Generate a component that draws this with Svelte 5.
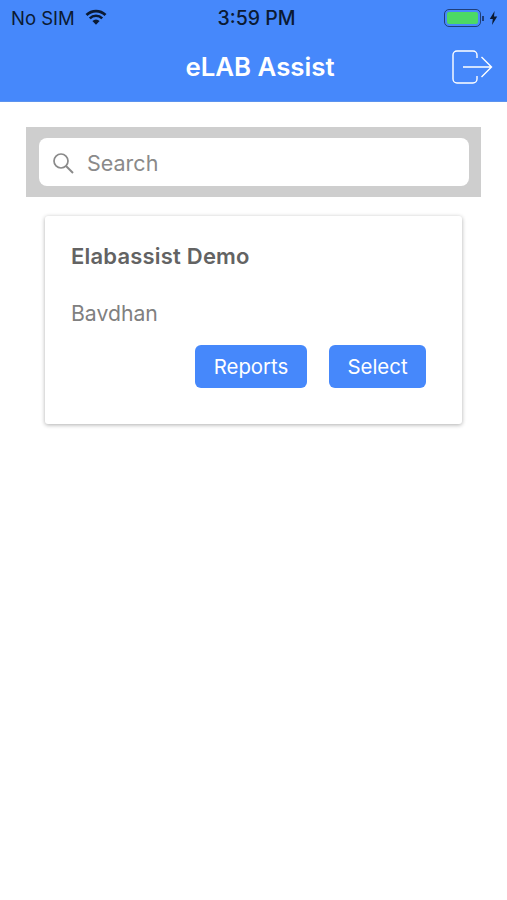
<script lang="ts">
	let query = $state('');
</script>

<div class="page">
	<header class="topbar">
		<div class="status">
			<div class="status-left">
				<span>No SIM</span>
				<svg class="wifi" width="22" height="16" viewBox="0 0 22 16" aria-hidden="true">
					<path d="M11 15.8L7.4 12a5 5 0 0 1 7.2 0z" fill="#0b1a33" />
					<path d="M4.8 9.3a8.8 8.8 0 0 1 12.4 0" fill="none" stroke="#0b1a33" stroke-width="2.6" />
					<path d="M1.5 6a13.5 13.5 0 0 1 19 0" fill="none" stroke="#0b1a33" stroke-width="2.8" />
				</svg>
			</div>
			<span class="clock">3:59 PM</span>
			<div class="status-right">
				<div class="battery"><div class="charge"></div></div>
				<div class="nub"></div>
				<svg class="bolt" width="9" height="14" viewBox="0 0 9 14" aria-hidden="true">
					<path d="M5.6 0L0.8 8h3L3 14l5.2-8.4H5z" fill="#0b1a33" />
				</svg>
			</div>
		</div>
		<div class="titlebar">
			<h1>eLAB Assist</h1>
			<svg class="logout" width="42" height="36" viewBox="0 0 42 36" aria-hidden="true">
				<path d="M26 9V6a4 4 0 0 0-4-4H6a4 4 0 0 0-4 4v24a4 4 0 0 0 4 4h16a4 4 0 0 0 4-4v-3" fill="none" stroke="#fff" stroke-width="1.4" />
				<path d="M12 18h28.5M30.5 8l10 10-10 10" fill="none" stroke="#fff" stroke-width="1.4" />
			</svg>
		</div>
	</header>

	<main class="content">
		<div class="searchbar">
			<label class="search-field">
				<svg width="22" height="22" viewBox="0 0 22 22" aria-hidden="true">
					<circle cx="9" cy="9" r="7" fill="none" stroke="#8a8a8a" stroke-width="1.7" />
					<path d="M14 14l7 7" stroke="#8a8a8a" stroke-width="1.9" />
				</svg>
				<input bind:value={query} placeholder="Search" />
			</label>
		</div>

		<section class="card">
			<h2>Elabassist Demo</h2>
			<p>Bavdhan</p>
			<div class="actions">
				<button class="reports">Reports</button>
				<button class="select">Select</button>
			</div>
		</section>
	</main>
</div>

<style>
	:global(body) {
		margin: 0;
		background: #fff;
	}

	.page {
		width: 507px;
		height: 900px;
		font-family: Inter, 'Liberation Sans', sans-serif;
		overflow: hidden;
	}

	.topbar {
		height: 102px;
		background: #4688fb;
		box-sizing: border-box;
		border-bottom: 1px solid #5c93ee;
	}

	.status {
		display: grid;
		grid-template-columns: 1fr auto 1fr;
		align-items: center;
		height: 36px;
		padding: 0 9px 0 11px;
		color: #0b1a33;
		font-size: 18.5px;
	}

	.status-left {
		display: flex;
		align-items: center;
		gap: 10px;
	}

	.wifi {
		margin-top: -3px;
	}

	.clock {
		margin-left: 4px;
		font-size: 19.5px;
		font-weight: 500;
	}

	.status-right {
		display: flex;
		align-items: center;
		justify-content: flex-end;
		gap: 1px;
	}

	.battery {
		width: 37px;
		height: 18px;
		box-sizing: border-box;
		padding: 2px;
		border: 1px solid #1f3f7a;
		border-radius: 5px;
	}

	.charge {
		height: 100%;
		background: #4cd964;
		border-radius: 2px;
	}

	.nub {
		width: 2px;
		height: 5px;
		background: #1f3f7a;
	}

	.bolt {
		margin-left: 4px;
	}

	.titlebar {
		position: relative;
		display: flex;
		justify-content: center;
		align-items: center;
		height: 60px;
		padding-left: 13px;
		box-sizing: border-box;
	}

	h1 {
		margin: 0;
		font-size: 25.8px;
		font-weight: 600;
		color: #fff;
	}

	.logout {
		position: absolute;
		right: 14px;
		top: 13px;
	}

	.content {
		display: flex;
		flex-direction: column;
		padding: 25px 26px 0;
	}

	.searchbar {
		background: #cecece;
		padding: 11px 12px 11px 13px;
	}

	.search-field {
		display: flex;
		align-items: center;
		gap: 13px;
		height: 48px;
		box-sizing: border-box;
		padding: 2px 13px 0;
		background: #fff;
		border-radius: 8px;
	}

	.search-field input {
		flex: 1;
		min-width: 0;
		border: 0;
		outline: 0;
		padding: 0;
		font: inherit;
		font-size: 21.5px;
		color: #333;
	}

	.search-field input::placeholder {
		color: #8a8a8a;
		opacity: 1;
	}

	.card {
		margin: 19px 19px 0;
		height: 208px;
		box-sizing: border-box;
		padding: 27px 36px 0 26px;
		background: #fff;
		border-radius: 3px;
		box-shadow: 0 1px 4px rgba(0, 0, 0, 0.32);
	}

	h2 {
		margin: 0;
		font-size: 22px;
		line-height: 26px;
		font-weight: 600;
		letter-spacing: 0.2px;
		color: #636363;
	}

	p {
		margin: 31px 0 0;
		font-size: 21.2px;
		line-height: 26px;
		color: #808080;
	}

	.actions {
		display: flex;
		justify-content: flex-end;
		gap: 22px;
		margin-top: 19px;
	}

	button {
		height: 43px;
		padding: 0;
		border: 0;
		border-radius: 6px;
		background: #4688fb;
		color: #fff;
		font: inherit;
		font-size: 20.4px;
	}

	.reports {
		width: 112px;
	}

	.select {
		width: 97px;
	}
</style>
